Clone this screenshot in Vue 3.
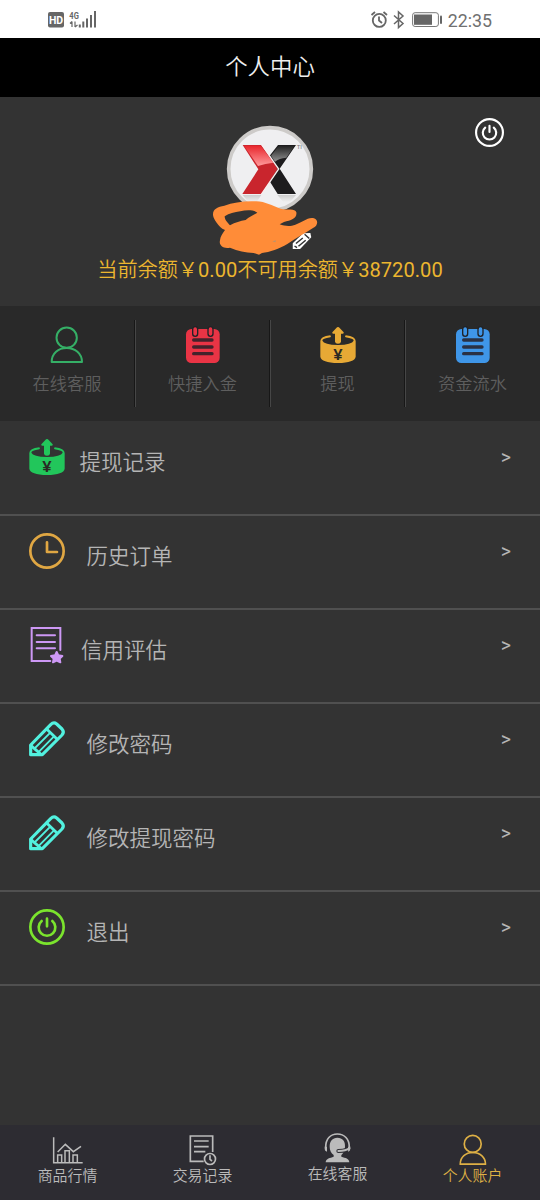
<script setup>
const shortcuts = [
  { icon: 'person', label: '在线客服', tone: 'green' },
  { icon: 'notepad', label: '快捷入金', tone: 'red' },
  { icon: 'withdraw', label: '提现', tone: 'amber' },
  { icon: 'notepad', label: '资金流水', tone: 'blue' }
]

const menu = [
  { icon: 'withdraw', label: '提现记录', tone: 'emerald', gap: 'gap-s' },
  { icon: 'clock', label: '历史订单', tone: 'gold', gap: 'gap-l' },
  { icon: 'docstar', label: '信用评估', tone: 'violet', gap: 'gap-m' },
  { icon: 'pencil', label: '修改密码', tone: 'cyan', gap: 'gap-l' },
  { icon: 'pencil', label: '修改提现密码', tone: 'cyan', gap: 'gap-l' },
  { icon: 'power', label: '退出', tone: 'lime', gap: 'gap-l' }
]

const tabs = [
  { icon: 'chart', box: '0 0 90 90', label: '商品行情' },
  { icon: 'record', box: '0 0 90 90', label: '交易记录' },
  { icon: 'headset', box: '0 0 90 90', label: '在线客服', raised: true },
  { icon: 'person', box: '0 0 108 108', label: '个人账户', active: true }
]
</script>

<template>
  <div class="screen">
    <svg class="defs" width="0" height="0">
      <defs>
        <g id="person" fill="none" stroke="currentColor" stroke-width="6" stroke-linejoin="round">
          <circle cx="53" cy="32" r="30.5" />
          <path d="M8 105C8 79 28 63 53 63S99 79 99 105Z" />
        </g>
        <g id="notepad">
          <rect x="3" y="6" width="101" height="102" rx="16" fill="currentColor" />
          <g fill="currentColor" stroke="#202226" stroke-width="4">
            <rect x="23" y="-1" width="15" height="29" rx="7.5" />
            <rect x="69" y="-1" width="15" height="29" rx="7.5" />
          </g>
          <path d="M26 39H81M26 60H81M26 80H81" stroke="#272027" stroke-opacity=".85" stroke-width="10" stroke-linecap="round" />
        </g>
        <g id="withdraw">
          <path fill="currentColor" d="M1 42Q1 29 31 25Q35 29 31 31Q7 35 7 41Q12 53 54 54Q96 53 101 41Q101 35 77 31Q73 29 77 25Q107 29 107 42V89Q104 107 54 108Q4 107 1 89Z" />
          <path fill="currentColor" d="M54 0Q57 0 59 3L71 16Q73 20 68 20H63V44Q62 50 54 50T45 44V20H40Q35 20 37 16L49 3Q51 0 54 0Z" />
          <text x="54" y="98" text-anchor="middle" class="yen" textLength="28" lengthAdjust="spacingAndGlyphs">¥</text>
        </g>
        <g id="clock" fill="none" stroke="currentColor" stroke-width="8" stroke-linecap="round" stroke-linejoin="round">
          <circle cx="54" cy="54" r="50" />
          <path d="M54 28V57H84" />
        </g>
        <g id="docstar" fill="none" stroke="currentColor" stroke-width="6" stroke-linecap="round">
          <path d="M94 69V3H8V102H64M23 25H78M23 45H78M23 64H78" />
          <path fill="currentColor" stroke-linejoin="round" d="M83 75L88 85L100 87L92 95L94 106L83 101L72 106L74 95L66 87L78 85Z" />
        </g>
        <g id="pencil" fill="none" stroke="currentColor" stroke-width="9.5" stroke-linecap="round" stroke-linejoin="round">
          <path d="M5 101V72L65 11Q74 2 83 9L99 24Q107 33 99 42L40 101Z" />
          <path d="M53 24L84 54M6 74L36 100" stroke-width="8.5" />
          <path d="M18 81L64 35M30 92L75 46" stroke-width="5.5" />
        </g>
        <g id="power" fill="none" stroke="currentColor" stroke-width="8" stroke-linecap="round">
          <circle cx="54" cy="54" r="50" />
          <path d="M38 36A25 25 0 1 0 70 36M54 29V52" />
        </g>
        <g id="chart" fill="none" stroke="currentColor" stroke-width="4.5">
          <path d="M2 7V83H89M14 83V60H26V83M36 83V47H49V83M60 83V60H73V83M14 51L37 28L61 50L84 34" />
        </g>
        <g id="record" fill="none" stroke="currentColor" stroke-width="5">
          <path d="M74 51V3H7V79H47M18 18H62M18 35H62M18 50H52" />
          <circle cx="66" cy="72" r="16.5" />
          <path d="M66 61V73L72 78" />
        </g>
        <g id="headset">
          <path d="M8 43C8 18 22 3 43 3S79 18 79 43" fill="none" stroke="currentColor" stroke-width="5" />
          <path d="M5 41H12V56Q5 55 5 48ZM82 41H75V56Q82 55 82 48Z" fill="currentColor" />
          <path d="M43 14C59 14 67 25 66 41C65 55 60 61 55 66V71C68 75 78 76 79 88H8C9 76 21 75 32 71V66C24 60 20 52 20 41C20 25 28 14 43 14Z" fill="currentColor" />
          <path d="M70 50Q62 54 46 54" fill="none" stroke="#2d2c32" stroke-width="12" stroke-linecap="round" />
          <path d="M79 46Q69 53 46 54" fill="none" stroke="currentColor" stroke-width="6" stroke-linecap="round" />
        </g>
      </defs>
    </svg>

    <header class="status">
      <svg class="network" viewBox="0 0 160 38">
        <rect x="18" y="12" width="16" height="15.5" rx="2" fill="#666" />
        <text x="26" y="23.6" text-anchor="middle" class="hd">HD</text>
        <text x="39.3" y="18.6" class="gen" textLength="9.5" lengthAdjust="spacingAndGlyphs">4G</text>
        <path d="M42 21.5V27M40 23.5L42 21.5M45 21.5V27M45 27L47.5 25" stroke="#666" stroke-width="1.2" fill="none" />
        <path d="M49.8 24.5V27.5M53.3 21.5V27.5M57 18.5V27.5M61 15V27.5M65 11V27.5" stroke="#666" stroke-width="2" />
      </svg>
      <div class="device">
        <svg class="device-icons" viewBox="0 0 74 38">
          <g fill="none" stroke="#666" stroke-width="1.8">
            <circle cx="9.3" cy="20.4" r="6.5" />
            <path d="M9 16.5V20.5L12 23M1.5 15L5 12M13.5 12L17 15" />
            <path d="M24 15.5L33 23.5L28.5 27.5V12L33 16L24 24" stroke-width="1.5" />
          </g>
          <rect x="42.6" y="12.7" width="25.8" height="13.8" rx="2.5" fill="none" stroke="#777" />
          <rect x="44" y="14.5" width="18" height="10.3" fill="#666" />
          <rect x="70" y="15.5" width="2" height="8.5" rx="1" fill="#666" />
        </svg>
        <span class="time">22:35</span>
      </div>
    </header>

    <h1 class="title">个人中心</h1>

    <section class="profile">
      <svg class="avatar" viewBox="0 0 480 450">
        <defs>
          <linearGradient id="redShine" x1="0" y1="0" x2="0" y2="1">
            <stop offset="0" stop-color="#e8262c" />
            <stop offset="1" stop-color="#ff9a9c" />
          </linearGradient>
          <linearGradient id="blackShine" x1="0" y1="0" x2="0" y2="1">
            <stop offset="0" stop-color="#222" />
            <stop offset="1" stop-color="#929292" />
          </linearGradient>
          <linearGradient id="fade" x1="0" y1="0" x2="0" y2="1">
            <stop offset="0" stop-color="#ccc" />
            <stop offset="1" stop-color="#f0f0f1" />
          </linearGradient>
        </defs>
        <circle cx="240" cy="177" r="124" fill="#efeff1" stroke="#cdcbc9" stroke-width="11" />
        <path d="M158 255H214L200 276H175ZM262 255H318L300 276H280Z" fill="url(#fade)" />
        <path d="M158 105H214L266 177L214 252H157L205 178Z" fill="#c9252d" />
        <path d="M162 107H212L250 158Q226 160 204 168Z" fill="url(#redShine)" />
        <path d="M264 105H318L269 176L318 252H263L239 214L263 177L239 137Z" fill="#1d1c1e" />
        <path d="M266 108H313L289 143Q267 145 255 155L243 137Z" fill="url(#blackShine)" />
        <path d="M215 104L266 177L214 253" fill="none" stroke="#f7eeee" stroke-width="4" />
        <text x="320" y="118" class="tm">TI</text>
        <g transform="translate(306 366) scale(.54 .5)">
          <path d="M4 102V68L62 8L102 6L107 32L45 102Z" fill="#fff" />
          <path d="M22 69L60 36M36 85L76 49M70 14L96 39" fill="none" stroke="#333" stroke-width="8" />
          <path d="M14 84L28 94" stroke="#333" stroke-width="8" />
        </g>
        <path fill="#ff8c38" fill-rule="evenodd" d="M69 315C68 296 83 291 103 287C130 277 165 272 199 274C226 275 246 287 272 296C291 302 316 293 319 307C322 324 304 331 282 336L269 343C285 349 302 350 316 344C337 338 353 320 372 325C387 331 383 348 369 354C344 370 318 385 292 402C268 416 239 427 216 429L207 434L191 429C166 427 144 423 120 413C99 417 86 406 90 391C91 379 98 370 105 360C93 355 87 348 80 338C74 330 70 323 69 315ZM104 319C104 330 112 337 120 346C136 337 151 333 167 330C178 320 189 315 202 308C190 299 168 300 151 304C133 307 118 310 104 319Z" />
        <path d="M247 394L258 391L256 397Z" fill="#b8936d" />
      </svg>
      <p class="balance">当前余额￥<span class="amount">0.00</span>不可用余额￥<span class="amount">38720.00</span></p>
      <svg class="logout" viewBox="0 0 108 108"><use href="#power" /></svg>
    </section>

    <nav class="shortcuts">
      <a v-for="s in shortcuts" :key="s.label" class="shortcut">
        <svg class="icon" :class="s.tone" viewBox="0 0 108 108"><use :href="'#' + s.icon" /></svg>
        <span>{{ s.label }}</span>
      </a>
    </nav>

    <ul class="menu">
      <li v-for="m in menu" :key="m.label" class="row">
        <svg class="icon" :class="m.tone" viewBox="0 0 108 108"><use :href="'#' + m.icon" /></svg>
        <span class="label" :class="m.gap">{{ m.label }}</span>
        <span class="arrow">&gt;</span>
      </li>
    </ul>

    <footer class="tabs">
      <a v-for="t in tabs" :key="t.label" class="tab" :class="{ active: t.active, raised: t.raised }">
        <svg class="tab-icon" :viewBox="t.box"><use :href="'#' + t.icon" /></svg>
        <span>{{ t.label }}</span>
      </a>
    </footer>
  </div>
</template>

<style>
body {
  margin: 0;
  background: #333;
}
</style>

<style scoped>
.screen {
  width: 540px;
  height: 1200px;
  display: flex;
  flex-direction: column;
  overflow: hidden;
  background: #333;
  font-family: Roboto, "Noto Sans CJK SC", sans-serif;
  font-weight: 350;
}
svg {
  display: block;
  flex: none;
  overflow: visible;
}
.defs {
  position: absolute;
}
.status {
  height: 38px;
  flex: none;
  display: flex;
  justify-content: space-between;
  background: #fff;
  padding: 0 48px 0 30px;
}
.network {
  width: 160px;
  height: 38px;
}
.hd {
  font: 700 10.5px Roboto, sans-serif;
  fill: #fff;
}
.gen {
  font: 700 9.5px Roboto, sans-serif;
  fill: #666;
}
.device {
  display: flex;
  gap: 4px;
}
.device-icons {
  width: 74px;
  height: 38px;
}
.time {
  font-size: 17.8px;
  font-weight: 400;
  line-height: 41px;
  color: #707070;
}
.title {
  flex: none;
  height: 59px;
  margin: 0;
  line-height: 58px;
  font-size: 22.4px;
  font-weight: 350;
  text-align: center;
  color: #eee;
  background: #000;
}
.profile {
  position: relative;
  flex: none;
  height: 196px;
  padding-top: 13px;
  display: flex;
  flex-direction: column;
  align-items: center;
}
.avatar {
  width: 160px;
  height: 150px;
}
.tm {
  font: 400 18px Roboto, sans-serif;
  fill: #777;
}
.balance {
  margin: 0;
  line-height: 20px;
  font-size: 20.15px;
  font-weight: 350;
  white-space: nowrap;
  color: #ecb62f;
}
.amount {
  font-weight: 400;
}
.logout {
  position: absolute;
  left: 475px;
  top: 21px;
  width: 29px;
  height: 29px;
  color: #fff;
}
.shortcuts {
  flex: none;
  height: 115px;
  display: grid;
  grid-template-columns: repeat(4, 1fr);
  background: #292929;
}
.shortcut {
  display: flex;
  flex-direction: column;
  align-items: center;
  height: 87px;
  margin-top: 14px;
  padding: 7px 1px 0 0;
  box-sizing: border-box;
  font-size: 17.2px;
  line-height: 22px;
  color: #5e5e5e;
}
.shortcut + .shortcut {
  border-left: 1px solid #464646;
  box-shadow: -1px 0 #171717;
}
.shortcut span {
  margin-top: 10px;
}
.icon {
  width: 36px;
  height: 36px;
}
.yen {
  font: 500 44px Roboto, sans-serif;
  fill: #2b2924;
}
.green { color: #35af66; }
.red { color: #e93445; }
.amber { color: #e7a935; }
.blue { color: #3f96e8; }
.emerald { color: #22c65b; }
.gold { color: #e0a743; }
.violet { color: #cd98f5; }
.cyan { color: #52f1df; }
.lime { color: #7be42d; }
.menu {
  flex: 1;
  list-style: none;
  margin: 0;
  padding: 1px 0 0;
}
.row {
  height: 94px;
  box-sizing: border-box;
  padding: 16.5px 29px 0;
  display: flex;
  align-items: flex-start;
  border-bottom: 2px solid #505050;
}
.label {
  margin-top: 9.5px;
  line-height: 30px;
  font-size: 21.5px;
  color: #b5b5b5;
}
.gap-s { margin-left: 14.5px; }
.gap-m { margin-left: 16px; }
.gap-l { margin-left: 21.5px; }
.arrow {
  margin: 8.5px 0 0 auto;
  line-height: 22px;
  font-size: 19.5px;
  font-weight: 400;
  color: #b5b5b5;
}
.tabs {
  flex: none;
  height: 75px;
  display: grid;
  grid-template-columns: repeat(4, 1fr);
  background: #2d2c32;
}
.tab {
  display: flex;
  flex-direction: column;
  align-items: center;
  padding-top: 10px;
  font-size: 14.9px;
  line-height: 23px;
  color: #bbb;
}
.tab-icon {
  width: 30px;
  height: 30px;
}
.raised {
  padding-top: 8px;
}
.active {
  color: #deb045;
}
</style>
